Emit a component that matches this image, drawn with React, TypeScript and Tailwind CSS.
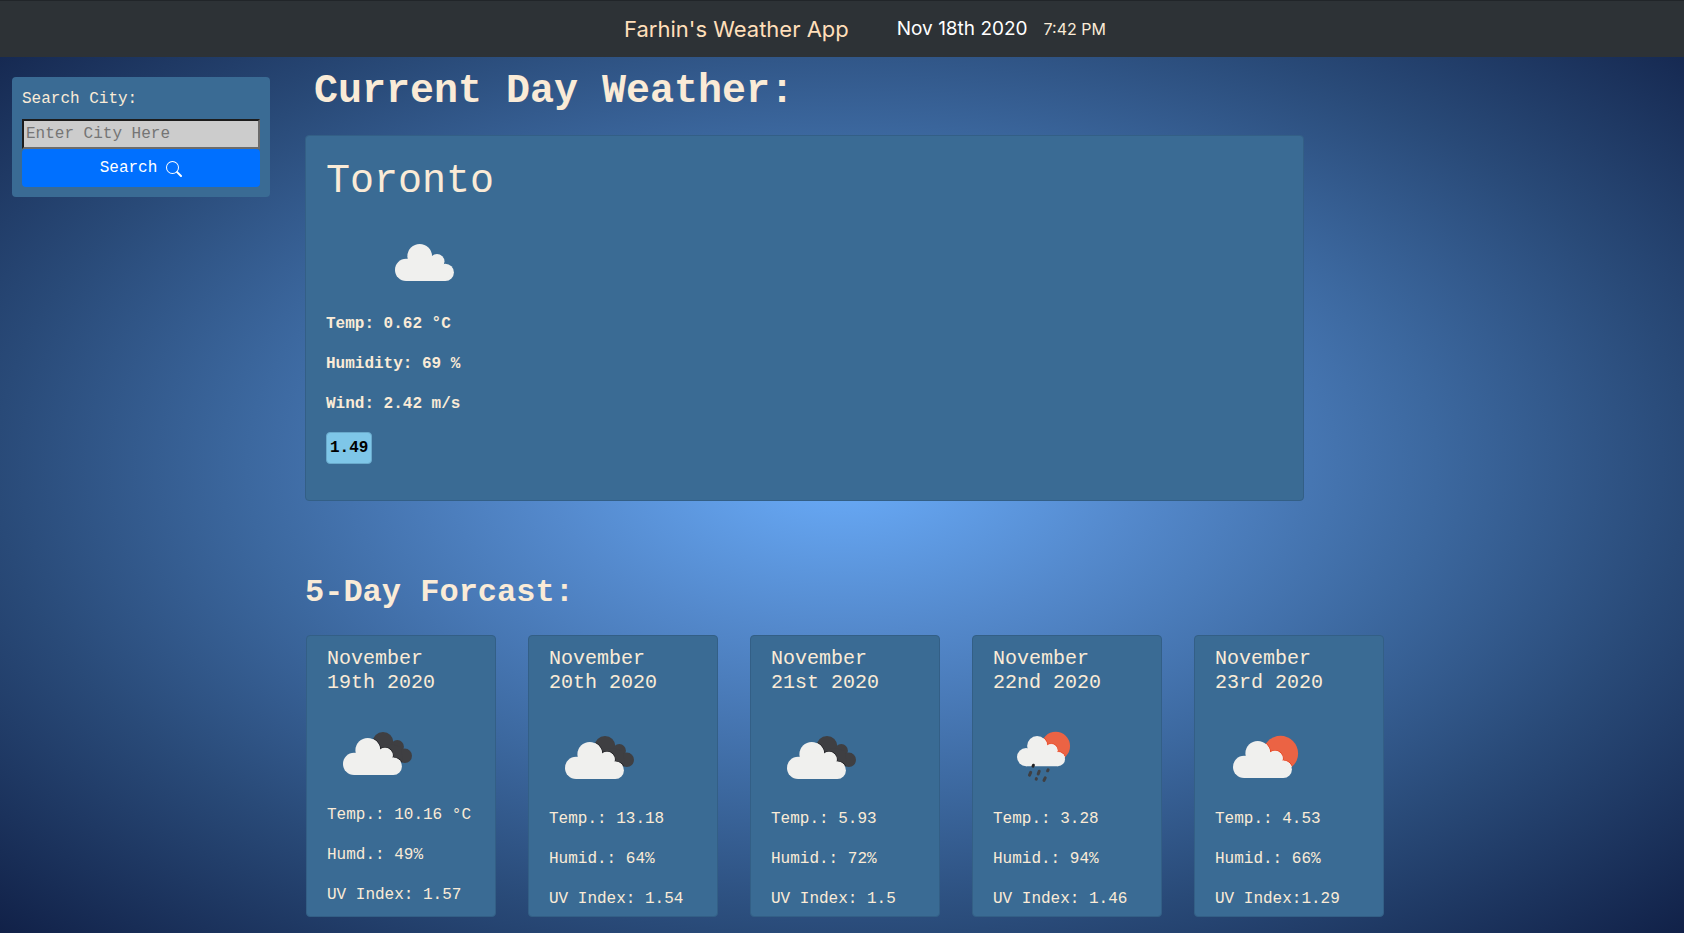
import { useId, useState } from "react";

type Kind = "cloud" | "broken" | "rain" | "few";

function CloudShape() {
  return (
    <>
      <circle cx="11.1" cy="25.9" r="11.1" />
      <circle cx="24.7" cy="12.3" r="12.3" />
      <circle cx="42" cy="17.5" r="7.5" />
      <circle cx="50.3" cy="28.4" r="8.6" />
      <path d="M11 37 L13 16 L24 10 L42 14 L50 25 L50.3 37 Z" />
    </>
  );
}

function Backdrop({ kind }: { kind: Kind }) {
  if (kind === "broken") {
    return (
      <>
        <circle cx="40" cy="4.3" r="10.4" />
        <circle cx="54.3" cy="8.7" r="6.6" />
        <circle cx="61.8" cy="17.8" r="7.2" />
        <path d="M34 8 L48 6 L58 9 L60 24 L40 20 Z" />
      </>
    );
  }
  return <circle cx="47.5" cy="12.4" r="17.6" />;
}

const placement: Record<Kind, string> = {
  cloud: "translate(21 32)",
  broken: "translate(16 43)",
  few: "translate(18 42)",
  rain: "translate(24 37) scale(.815)",
};

function WeatherIcon({ kind }: { kind: Kind }) {
  const clip = useId();
  const broken = kind === "broken";
  return (
    <svg viewBox="0 0 100 100" className="block size-[100px]" aria-hidden="true">
      <g transform={placement[kind]}>
        {kind !== "cloud" && (
          <>
            <clipPath id={clip}>
              <Backdrop kind={kind} />
            </clipPath>
            <g fill={broken ? "#3f3f42" : "#eb6344"}>
              <Backdrop kind={kind} />
            </g>
            <g clipPath={`url(#${clip})`}>
              <g fill={broken ? "#1f1f22" : "#e5401c"} stroke={broken ? "#1f1f22" : "#e5401c"} strokeWidth="2">
                <CloudShape />
              </g>
              <g fill="#ffffff" stroke="#ffffff" strokeWidth=".6">
                <CloudShape />
              </g>
            </g>
          </>
        )}
        <g fill="#f0f0ee">
          <CloudShape />
        </g>
      </g>
      {kind === "rain" && (
        <g transform="translate(24 37)" stroke="#3f3f42" strokeWidth="3" strokeLinecap="round">
          <path d="M16.4 29.2L16 30.2" stroke="#222224" />
          <path d="M13.7 36.4L12.5 39.2M22.2 35.2L21.2 38M31.1 33.8L30.6 34.8M19.4 42.6L19.2 43.2M28.2 41.8L27 44.4" />
        </g>
      )}
    </svg>
  );
}

interface Day {
  date: string;
  kind: Kind;
  lines: string[];
  compact?: boolean;
}

const days: Day[] = [
  { date: "November 19th 2020", kind: "broken", lines: ["Temp.: 10.16 °C", "Humd.: 49%", "UV Index: 1.57"], compact: true },
  { date: "November 20th 2020", kind: "broken", lines: ["Temp.: 13.18", "Humid.: 64%", "UV Index: 1.54"] },
  { date: "November 21st 2020", kind: "broken", lines: ["Temp.: 5.93", "Humid.: 72%", "UV Index: 1.5"] },
  { date: "November 22nd 2020", kind: "rain", lines: ["Temp.: 3.28", "Humid.: 94%", "UV Index: 1.46"] },
  { date: "November 23rd 2020", kind: "few", lines: ["Temp.: 4.53", "Humid.: 66%", "UV Index:1.29"] },
];

function DayCard({ day }: { day: Day }) {
  return (
    <article className="w-[190px] rounded-[4px] border border-[#335f86] bg-[#3a6b94] px-5 pt-[11px] pb-[5px]">
      <h3 className="text-[20px] leading-[24px]">{day.date}</h3>
      <div className={day.compact ? "" : "mt-1"}>
        <WeatherIcon kind={day.kind} />
      </div>
      <div className="mt-2 flex flex-col gap-4">
        {day.lines.map((line) => (
          <p key={line} className="whitespace-nowrap">{line}</p>
        ))}
      </div>
    </article>
  );
}

export default function App() {
  const [city, setCity] = useState("");

  return (
    <div className="flex min-h-screen flex-col bg-[radial-gradient(#6aadfb_0%,#5489cc_25%,#3c689f_50%,#294a78_71%,#112148_100%)] font-['Liberation_Mono',monospace] text-[16px] leading-[24px] text-[#faebd7]">
      <header className="flex h-[57px] items-center justify-center border-t border-[#212529] bg-[#2d3236] font-['Inter',sans-serif]">
        <nav className="ml-[46px] flex items-center">
          <a href="#home" className="mr-12 text-[22px] leading-[30px] text-[#ffdfba]">Farhin's Weather App</a>
          <span className="mr-4 text-[19px] leading-[30px] text-white">Nov 18th 2020</span>
          <span className="text-[16px]">7:42 PM</span>
        </nav>
      </header>

      <div className="flex flex-1 items-start pb-[16px]">
        <form
          className="mt-5 ml-3 flex w-[258px] shrink-0 flex-col rounded-[4px] bg-[#3a6b94] p-[10px]"
          onSubmit={(e) => e.preventDefault()}
        >
          <label htmlFor="city" className="mb-2">Search City:</label>
          <input
            id="city"
            type="text"
            value={city}
            onChange={(e) => setCity(e.target.value)}
            placeholder="Enter City Here"
            className="h-[30px] w-full border-2 border-t-[#1c1c1c] border-r-[#6b6b6b] border-b-[#6b6b6b] border-l-[#1c1c1c] bg-[#cccccc] px-[2px] text-black placeholder:text-[#757575]"
          />
          <button type="submit" className="flex h-[38px] items-center justify-center gap-[9px] rounded-[4px] bg-[#0070ff] text-white">
            Search
            <svg viewBox="0 0 16 16" className="mt-[2px] size-4" fill="currentColor" aria-hidden="true">
              <path d="M10.442 10.442a1 1 0 0 1 1.415 0l3.85 3.85a1 1 0 0 1-1.414 1.415l-3.85-3.85a1 1 0 0 1 0-1.415z" />
              <path d="M6.5 12a5.5 5.5 0 1 0 0-11 5.5 5.5 0 0 0 0 11zM13 6.5a6.5 6.5 0 1 1-13 0 6.5 6.5 0 0 1 13 0z" />
            </svg>
          </button>
        </form>

        <main className="ml-[35px] min-w-0 flex-1">
          <h1 className="mt-[11px] ml-[9px] text-[40px] leading-[48px] font-bold">Current Day Weather:</h1>
          <section className="mt-[19px] mr-[380px] rounded-[4px] border border-[#335f86] bg-[#3a6b94] px-5 pt-[22px] pb-9">
            <h2 className="text-[40px] leading-[48px]">Toronto</h2>
            <div className="mt-[6px] ml-[48px]">
              <WeatherIcon kind="cloud" />
            </div>
            <div className="flex flex-col items-start gap-4 font-bold">
              <p>Temp: 0.62 °C</p>
              <p>Humidity: 69 %</p>
              <p>Wind: 2.42 m/s</p>
              <p className="rounded-[4px] border border-[#69a9cb] bg-[#7ec6e8] px-[3px] py-[3px] text-black">1.49</p>
            </div>
          </section>
          <h2 className="mt-[72px] text-[32px] leading-[40px] font-bold">5-Day Forcast:</h2>
          <div className="mt-[22px] ml-px flex gap-8">
            {days.map((day) => (
              <DayCard key={day.date} day={day} />
            ))}
          </div>
        </main>
      </div>
    </div>
  );
}
